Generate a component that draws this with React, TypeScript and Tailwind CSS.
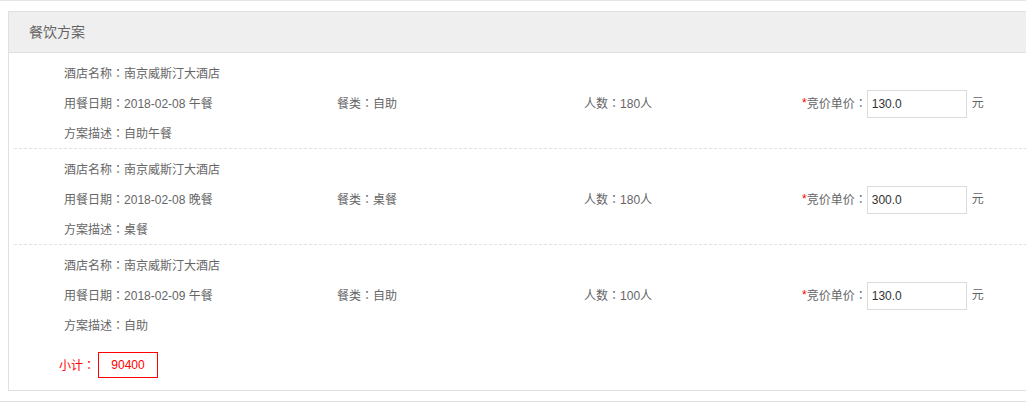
import React from "react";

const plans = [
  { date: "2018-02-08 午餐", type: "自助", people: "180人", price: "130.0", desc: "自助午餐" },
  { date: "2018-02-08 晚餐", type: "桌餐", people: "180人", price: "300.0", desc: "桌餐" },
  { date: "2018-02-09 午餐", type: "自助", people: "100人", price: "130.0", desc: "自助" },
];

function C() {
  return (
    <span style={{ fontFamily: '"Noto Sans CJK TC", sans-serif' }}>：</span>
  );
}

export default function App() {
  return (
    <div
      className="w-[1026px] h-[403px] overflow-hidden bg-white text-[12px] text-[#666]"
      style={{ fontFamily: '"Liberation Sans", "Noto Sans CJK SC", sans-serif' }}
    >
      <div className="border-t border-[#e5e5e5] pt-[10px]">
        <div className="ml-[8px] w-[1040px] border border-[#e0e0e0]">
          <div className="h-[41px] bg-[#efefef] border-b border-[#e0e0e0] pl-[20px] text-[14px] leading-[40px] text-[#666]">
            餐饮方案
          </div>
          <div>
            {plans.map((p, i) => (
              <div
                key={i}
                className={
                  "ml-[5px] pl-[50px] pt-[5px] " +
                  (i < plans.length - 1 ? "border-b border-dashed border-[#e3e3e3]" : "")
                }
              >
                <div className="h-[30px] flex items-center">
                  <span>酒店名称<C />南京威斯汀大酒店</span>
                </div>
                <div className="h-[30px] flex items-center">
                  <div className="w-[273px]">用餐日期<C />{p.date}</div>
                  <div className="w-[247px]">餐类<C />{p.type}</div>
                  <div className="w-[218px]">人数<C />{p.people}</div>
                  <div className="flex items-center">
                    <span className="text-[#f00]">*</span>
                    <span>竞价单价<C /></span>
                    <div className="w-[100px] h-[28px] border border-[#dcdcdc] pl-[4px] flex items-center text-[#333] mt-[2px]">
                      {p.price}
                    </div>
                    <span className="ml-[5px]">元</span>
                  </div>
                </div>
                <div className="h-[30px] flex items-center">
                  <span>方案描述<C />{p.desc}</span>
                </div>
              </div>
            ))}
            <div className="pl-[50px] mt-[12px] pb-[12px] flex items-center text-[#f00]">
              <span className="w-[39px]">小计<C /></span>
              <div className="w-[60px] h-[26px] border border-[#f00] flex items-center justify-center">
                90400
              </div>
            </div>
          </div>
        </div>
        <div className="mt-[10px] border-t border-[#e0e0e0] h-[10px]"></div>
      </div>
    </div>
  );
}
